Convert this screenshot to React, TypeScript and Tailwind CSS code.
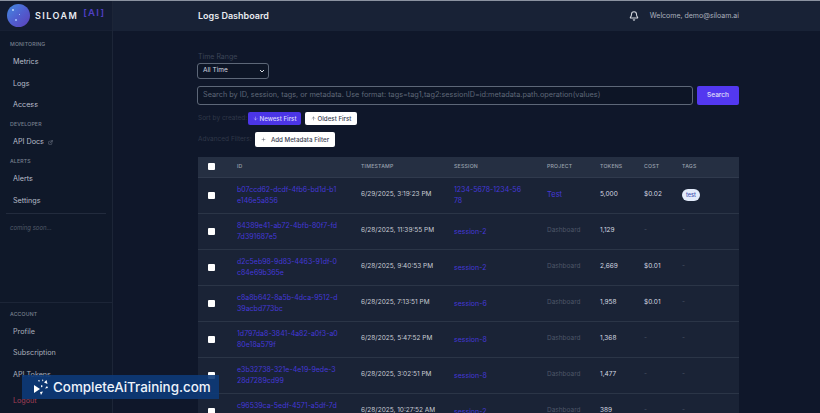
import { Bell, ExternalLink, ArrowDown, ArrowUp, Plus } from "lucide-react";

const rows = [
  { id: ["b07ccd62-dcdf-4fb6-bd1d-b1", "e146e5a856"], time: "6/29/2025, 3:19:23 PM", session: ["1234-5678-1234-56", "78"], project: "Test", tokens: "5,000", cost: "$0.02", tag: "test" },
  { id: ["84389e41-ab72-4bfb-80f7-fd", "7d391687e5"], time: "6/28/2025, 11:39:55 PM", session: ["session-2"], project: "Dashboard", tokens: "1,129", cost: "-", tag: "" },
  { id: ["d2c5eb98-9d83-4463-91df-0", "c84e69b365e"], time: "6/28/2025, 9:40:53 PM", session: ["session-2"], project: "Dashboard", tokens: "2,669", cost: "$0.01", tag: "" },
  { id: ["c8a8b642-8a5b-4dca-9512-d", "39acbd773bc"], time: "6/28/2025, 7:13:51 PM", session: ["session-6"], project: "Dashboard", tokens: "1,958", cost: "$0.01", tag: "" },
  { id: ["1d797da8-3841-4a82-a0f3-a0", "80e18a579f"], time: "6/28/2025, 5:47:52 PM", session: ["session-8"], project: "Dashboard", tokens: "1,368", cost: "-", tag: "" },
  { id: ["e3b32738-321e-4e19-9ede-3", "28d7289cd99"], time: "6/28/2025, 3:02:51 PM", session: ["session-8"], project: "Dashboard", tokens: "1,477", cost: "-", tag: "" },
  { id: ["c96539ca-5edf-4571-a5df-7d", "04e1b2f3a9"], time: "6/28/2025, 10:27:52 AM", session: ["session-2"], project: "Dashboard", tokens: "389", cost: "-", tag: "" },
];

const headers = ["ID", "TIMESTAMP", "SESSION", "PROJECT", "TOKENS", "COST", "TAGS"];

const NavLabel = ({ children }: { children: string }) => (
  <div className="pl-[10px] h-[14px] flex items-center text-[5.2px] font-medium tracking-[0.03em] text-[#79808f]">{children}</div>
);

const NavItem = ({ children, className = "text-[#a9afbb]" }: { children: React.ReactNode; className?: string }) => (
  <div className={`pl-[13px] h-[21.3px] flex items-center text-[7.2px] ${className}`}>{children}</div>
);

const Box = () => <span className="block w-[7px] h-[7px] bg-white rounded-[1px]" />;

export default function App() {
  return (
    <div className="relative w-[820px] h-[413px] overflow-hidden flex flex-col bg-[#0f172a] font-['Inter',sans-serif]">
      <div className="h-[1px] shrink-0 bg-[#8b93a1]" />
      <div className="flex-1 min-h-0 flex">
        {/* Sidebar */}
        <aside className="w-[113px] shrink-0 flex flex-col border-r border-[#1c2537] bg-[#0f1829]">
          <div className="h-[30px] shrink-0 flex items-center pl-[7px] border-b border-[#172033] bg-[#131c30]">
            <div className="relative w-[23px] h-[23px] rounded-full bg-gradient-to-br from-[#3f8be0] via-[#4f5fd0] to-[#5a3fb8]">
              <span className="absolute left-[5px] top-[5px] w-[2px] h-[2px] rounded-full bg-[#bcd8ff]" />
              <span className="absolute left-[12px] top-[10px] w-[1px] h-[1px] rounded-full bg-[#bcd8ff]" />
              <span className="absolute left-[8px] top-[15px] w-[2px] h-[2px] rounded-full bg-[#a9c6ff]" />
            </div>
            <span className="ml-[5px] text-[9px] font-semibold tracking-[0.16em] text-[#e8ebf0]">SILOAM</span>
            <span className="ml-[5px] mb-[4px] text-[9.5px] font-semibold tracking-[0.14em] text-[#4f3fc4]">[AI]</span>
          </div>
          <div className="mt-[7px]">
            <NavLabel>MONITORING</NavLabel>
            <NavItem className="text-[#b9bec9]">Metrics</NavItem>
            <NavItem className="text-[#b9bec9]">Logs</NavItem>
            <NavItem className="text-[#b9bec9]">Access</NavItem>
            <div className="h-[2px]" />
            <NavLabel>DEVELOPER</NavLabel>
            <NavItem className="text-[#b9bec9]">
              API Docs
              <ExternalLink className="w-[5px] h-[5px] ml-[4px] text-[#8d94a3]" />
            </NavItem>
            <div className="h-[2px]" />
            <NavLabel>ALERTS</NavLabel>
            <NavItem className="text-[#b9bec9]">Alerts</NavItem>
            <NavItem className="text-[#b9bec9]">Settings</NavItem>
          </div>
          <div className="mt-[1px] mx-[6px] border-t border-[#222b3d] pt-[9px] pl-[4px] text-[6px] italic text-[#4f5868]">coming soon...</div>
          <div className="mt-auto border-t border-[#1c2537] pt-[5px] pb-[1px]">
            <NavLabel>ACCOUNT</NavLabel>
            <NavItem>Profile</NavItem>
            <NavItem>Subscription</NavItem>
            <NavItem>API Tokens</NavItem>
            <div className="h-[5px]" />
            <NavItem className="text-[#a33e55]">Logout</NavItem>
          </div>
        </aside>

        {/* Main */}
        <main className="flex-1 min-w-0 flex flex-col">
          <header className="h-[30px] shrink-0 flex items-center bg-[#182236] pl-[85px] pr-[81px]">
            <h1 className="text-[9px] font-semibold text-[#e8ebf0]">Logs Dashboard</h1>
            <Bell className="ml-auto w-[10px] h-[10px] text-[#d5d9e0]" strokeWidth={2.5} />
            <span className="ml-[11px] text-[7px] text-[#aab0bc]">Welcome, demo@siloam.ai</span>
          </header>
          <div className="w-[541px] ml-[85px] pt-[22px]">
            <div className="text-[7px] leading-[8px] text-[#3c4557]">Time Range</div>
            <div className="mt-[2px] -ml-[1px] w-[72px] h-[16px] rounded-[3px] border border-[#5d6778] bg-[#0d1526] flex items-center justify-between pl-[5px] pr-[3px] text-[6.5px] text-[#d5d9e0]">
              All Time
              <svg width="6" height="6" viewBox="0 0 6 6" fill="none" stroke="#d5d9e0" strokeWidth="1"><path d="M1 2l2 2 2-2" /></svg>
            </div>
            <div className="mt-[7px] -ml-[1px] flex gap-[4px]">
              <div className="flex-1 h-[19px] rounded-[3px] border border-[#5d6778] bg-[#0d1526] flex items-center pl-[5px] text-[7.3px] text-[#5f6878] whitespace-nowrap overflow-hidden">
                Search by ID, session, tags, or metadata. Use format: tags=tag1,tag2:sessionID=id:metadata.path.operation(values)
              </div>
              <div className="w-[42px] h-[19px] rounded-[2px] bg-[#5338f0] flex items-center justify-center text-[6.5px] font-medium text-[#e4e2fb]">Search</div>
            </div>
            <div className="mt-[7px] h-[13px] flex items-center">
              <span className="w-[50px] text-[6.5px] text-[#2f3849]">Sort by created:</span>
              <span className="w-[53px] h-[13px] rounded-[2px] bg-[#4b35e6] flex items-center justify-center gap-[2px] text-[6.2px] font-medium text-[#dcdafa]">
                <ArrowDown className="w-[5px] h-[5px]" />
                Newest First
              </span>
              <span className="ml-[4px] w-[52px] h-[13px] rounded-[2px] bg-white flex items-center justify-center gap-[2px] text-[6.2px] font-medium text-[#3a4252]">
                <ArrowUp className="w-[5px] h-[5px]" />
                Oldest First
              </span>
            </div>
            <div className="mt-[7px] h-[15px] flex items-center">
              <span className="w-[57px] text-[6.5px] text-[#2f3849]">Advanced Filters:</span>
              <span className="w-[80px] h-[15px] rounded-[2px] bg-white flex items-center justify-center gap-[5px] text-[6.2px] font-medium text-[#3a4252]">
                <Plus className="w-[5px] h-[5px]" />
                Add Metadata Filter
              </span>
            </div>
            <table className="mt-[10px] w-full table-fixed border-collapse bg-[#1a2336]">
              <colgroup>
                <col className="w-[39px]" />
                <col className="w-[124px]" />
                <col className="w-[93px]" />
                <col className="w-[93px]" />
                <col className="w-[53px]" />
                <col className="w-[44px]" />
                <col className="w-[38px]" />
                <col />
              </colgroup>
              <thead>
                <tr className="h-[20px] bg-[#252f42] border-b border-[#303a4d]">
                  <th className="pl-[10px]"><Box /></th>
                  {headers.map((h) => (
                    <th key={h} className="text-left text-[5.2px] font-medium tracking-[0.04em] text-[#9aa1ae]">{h}</th>
                  ))}
                </tr>
              </thead>
              <tbody>
                {rows.map((r) => (
                  <tr key={r.id[0]} className="h-[36px] border-b-[1px] border-[#2b3547]">
                    <td className="pl-[10px]"><Box /></td>
                    <td className="text-[7px] leading-[11px] text-[#4438d8]">
                      {r.id[0]}<br />{r.id[1]}
                    </td>
                    <td className="text-[6.5px] text-[#c8ccd4]">{r.time}</td>
                    <td className="text-[7px] leading-[11px] text-[#4438d8]">
                      {r.session[0]}
                      {r.session[1] && <><br />{r.session[1]}</>}
                    </td>
                    <td className={r.project === "Test" ? "text-[7.5px] text-[#4438d8]" : "text-[6.5px] text-[#4d5667]"}>{r.project}</td>
                    <td className="text-[6.5px] text-[#d5d9e0]">{r.tokens}</td>
                    <td className={r.cost === "-" ? "text-[6.5px] text-[#4d5667]" : "text-[6.5px] text-[#d5d9e0]"}>{r.cost}</td>
                    <td className="text-[6.5px] text-[#4d5667]">
                      {r.tag ? (
                        <span className="inline-flex items-center h-[12px] px-[4px] rounded-full bg-[#e3ebfb] text-[5.5px] font-medium text-[#3f4fb0]">{r.tag}</span>
                      ) : "-"}
                    </td>
                  </tr>
                ))}
              </tbody>
            </table>
          </div>
        </main>
      </div>

      {/* Watermark */}
      <div className="absolute left-[22px] top-[375px] w-[197px] h-[24px] flex items-center bg-[#0d3a78]/90">
        <svg width="16" height="16" viewBox="0 0 16 16" className="ml-[11px]" fill="#fff">
          <path d="M5 1l2 .5-1 1.5zM9 .5l1.5.5-1 1.5zM13.5 1l1 4-3.5-1.5zM1 6l6 4-6 4zM8 6l2 1-2 1.5zM14 7l1 2-3 .5zM7 13l3-.5-2 3.5z" />
        </svg>
        <span className="ml-[4px] text-[13.4px] font-medium text-[#eef3fb] whitespace-nowrap">CompleteAiTraining.com</span>
      </div>
    </div>
  );
}
